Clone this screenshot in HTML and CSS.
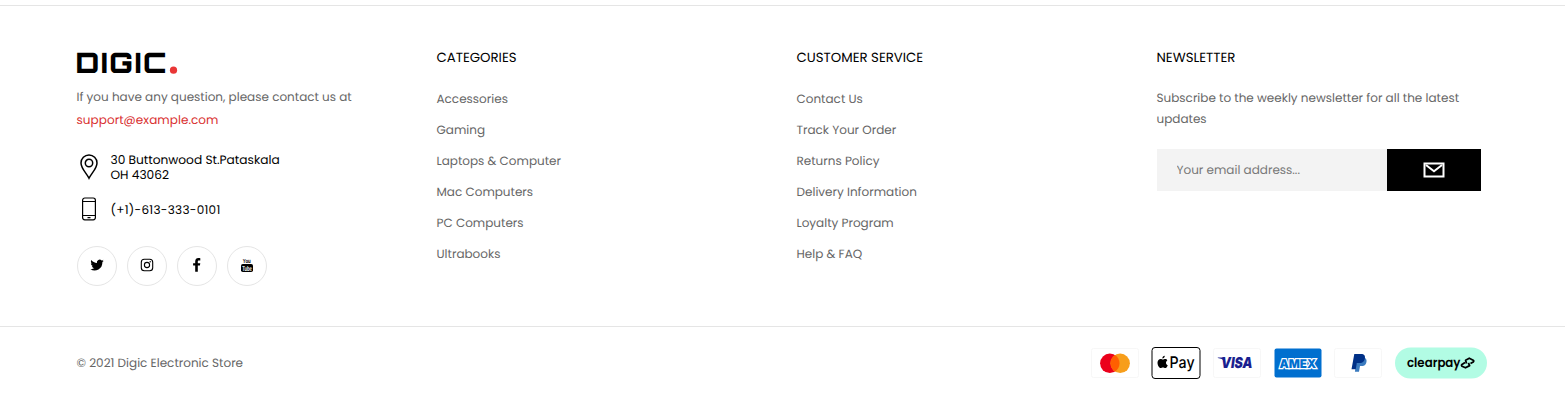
FILE: index.html
```html
<!DOCTYPE html>
<html lang="en">
<head>
<meta charset="utf-8">
<title>Digic Electronic Store</title>
<link rel="stylesheet" href="styles.css">
</head>
<body>
<footer class="footer">
  <div class="columns">
    <section class="about">
      <svg class="logo" width="102" height="22" viewBox="0 0 102 22" role="img" aria-label="Digic">
        <text class="logo-text" x="-1.500" y="21.300" textLength="93" lengthAdjust="spacingAndGlyphs">DIGIC</text>
        <circle cx="96.500" cy="18.200" r="3.600" fill="#e93636"/>
      </svg>
      <p class="question">If you have any question, please contact us at</p>
      <a class="mail">support@example.com</a>
      <div class="contact">
        <svg width="24" height="26" viewBox="0 0 24 26" fill="none" stroke="#000" stroke-width="1.500"><path d="M12 24.300C9.700 19.500 4 14.500 4 9A8 8 0 0 1 20 9C20 14.500 14.300 19.500 12 24.300Z"/><circle cx="12" cy="9" r="3.700"/></svg>
        <p class="address">30 Buttonwood St.Pataskala<br>OH 43062</p>
      </div>
      <div class="contact phone">
        <svg width="24" height="24" viewBox="0 0 24 24" fill="none" stroke="#000" stroke-width="1.200"><rect x="5.600" y="1" width="12.800" height="21.800" rx="2.200"/><path d="M5.600 4.500H18.400M5.600 18.500H18.400M10.500 20.700H13.500"/></svg>
        <p class="number">(+1)-613-333-0101</p>
      </div>
      <div class="socials">
        <a class="social"><svg width="14" height="14" viewBox="0 0 24 24"><path d="M23.600 4.900c-.8.400-1.700.6-2.700.8 1-.6 1.700-1.500 2-2.600-.9.500-1.900.9-3 1.100a4.700 4.700 0 0 0-8 4.300C8 8.300 4.500 6.400 2.200 3.500c-1.300 2.200-.6 5 1.400 6.300-.7 0-1.500-.2-2.100-.6 0 2.300 1.600 4.300 3.800 4.700-.7.200-1.400.2-2.100.1.600 1.900 2.300 3.200 4.400 3.300A9.500 9.500 0 0 1 .6 19.200 13.400 13.400 0 0 0 21.200 7.300c.9-.7 1.700-1.500 2.400-2.400z"/></svg></a>
        <a class="social"><svg width="14" height="14" viewBox="0 0 14 14" fill="none" stroke="#000"><rect x="1.300" y="1.300" width="11.400" height="11.400" rx="3" stroke-width="1.100"/><circle cx="7" cy="7" r="2.600" stroke-width="1.100"/><circle cx="10.200" cy="3.800" r=".7" fill="#000" stroke="none"/></svg></a>
        <a class="social"><svg width="14" height="14" viewBox="0 0 14 14"><path d="M10.300.3v2.200H9c-1 0-1.200.5-1.200 1.200v1.500h2.500L9.900 7.600H7.800V13.800H5.200V7.600H3.100V5.200H5.200V3.400C5.200 1.300 6.500.1 8.400.1c.9 0 1.600.1 1.900.2z"/></svg></a>
        <a class="social"><svg width="14" height="16" viewBox="0 0 14 16"><text class="yt" x="2.800" y="6" textLength="8" lengthAdjust="spacingAndGlyphs">You</text><rect x="1" y="7" width="12" height="8" rx="1.800"/><text class="yt yt-light" x="2.200" y="13.700" textLength="9.600" lengthAdjust="spacingAndGlyphs">Tube</text></svg></a>
      </div>
    </section>
    <nav class="col">
      <h2 class="title">CATEGORIES</h2>
      <ul class="links">
        <li>Accessories</li><li>Gaming</li><li>Laptops &amp; Computer</li><li>Mac Computers</li><li>PC Computers</li><li>Ultrabooks</li>
      </ul>
    </nav>
    <nav class="col">
      <h2 class="title">CUSTOMER SERVICE</h2>
      <ul class="links">
        <li>Contact Us</li><li>Track Your Order</li><li>Returns Policy</li><li>Delivery Information</li><li>Loyalty Program</li><li>Help &amp; FAQ</li>
      </ul>
    </nav>
    <section class="col">
      <h2 class="title">NEWSLETTER</h2>
      <p class="intro">Subscribe to the weekly newsletter for all the latest<br>updates</p>
      <form class="signup">
        <input class="email" type="email" placeholder="Your email address...">
        <button class="send" type="button" aria-label="Subscribe"><svg width="22" height="16" viewBox="0 0 22 16" fill="none" stroke="#fff" stroke-width="2"><rect x="1.500" y="1.500" width="19" height="13"/><path d="M3 3L11 9.300L19 3"/></svg></button>
      </form>
    </section>
  </div>
  <div class="bottom">
    <p class="copyright">© 2021 Digic Electronic Store</p>
    <div class="payments">
      <svg class="mastercard" width="48" height="32" viewBox="0 0 48 32"><rect class="card" x=".5" y="1.500" width="47" height="29" rx="2"/><circle cx="18.800" cy="16.300" r="9.700" fill="#eb001b"/><circle cx="29.200" cy="16.300" r="9.700" fill="#f79e1b"/><path d="M24 8.100a9.700 9.700 0 0 1 0 16.400a9.700 9.700 0 0 1 0-16.400z" fill="#ff5f00"/></svg>
      <svg class="apple" width="50" height="32" viewBox="0 0 50 32"><rect x="1" y=".5" width="48" height="31" rx="3" fill="#fff" stroke="#000"/><path d="M13.800 8.800c.1 1.500-1.200 2.700-2.500 2.700-.1-1.400 1.200-2.600 2.500-2.700zM16.300 13.400c-1.900 1.200-1.600 3.900.5 4.800-.5 1.400-1.500 2.900-2.600 2.900-.9 0-1.200-.5-2.300-.5s-1.400.5-2.200.5C8.100 21.100 6.500 18 6.500 15.800c0-2.500 1.600-3.800 3.100-3.800.9 0 1.700.6 2.300.6.600 0 1.500-.7 2.700-.6.500 0 1.300.3 1.700 1.400z"/><text class="pay" x="18.600" y="21" textLength="25" lengthAdjust="spacingAndGlyphs">Pay</text></svg>
      <svg width="48" height="32" viewBox="0 0 48 32"><rect class="card" x=".5" y="1.500" width="47" height="29" rx="2"/><text class="visa" x="8" y="21.200" textLength="31.500" lengthAdjust="spacingAndGlyphs">VISA</text><path d="M4.800 10.600h5l1.500 3.600c-1.400-1.700-3.300-2.700-6.500-3.100z" fill="#1a1f8f"/></svg>
      <svg width="48" height="32" viewBox="0 0 48 32"><rect x=".5" y="1.500" width="47" height="29" rx="2" fill="#006fcf"/><text class="amex" x="5.500" y="20.600" textLength="36.500" lengthAdjust="spacingAndGlyphs">AMEX</text></svg>
      <svg width="48" height="32" viewBox="0 0 48 32"><rect class="card" x=".5" y="1.500" width="47" height="29" rx="2"/><g transform="translate(1 0)"><path d="M22 10.500h6.500c3 .6 3.600 2.900 2.700 5.500-.8 2.300-2.400 3.100-5.200 3.100h-1l-1 5.700h-4.100z" fill="#3b7bbf"/><path d="M19.300 7h6.600c3.400 0 4.700 2 3.900 4.900-.8 3-2.800 4.200-6 4.200h-2l-1 6.100h-4.300z" fill="#003087"/></g></svg>
      <svg width="92" height="32" viewBox="0 0 92 32"><rect y=".5" width="92" height="31" rx="15.500" fill="#b2fce4"/><text class="clearpay" x="12" y="20.300" textLength="53.500" lengthAdjust="spacingAndGlyphs">clearpay</text><g fill="none" stroke="#000" stroke-width="1.800" stroke-linejoin="round"><path d="M70 15.400L67 17.400Q66 18.400 67 19.200L70.500 20.800L74.600 18.600L73.400 15.800"/><path d="M71.500 16.600L70.600 13.200L74.300 11.200L78.200 13.200Q79.300 14 78.200 15L75.500 16.600"/></g></svg>
    </div>
  </div>
</footer>
</body>
</html>
```
FILE: styles.css
```css
* { box-sizing: border-box; }
body { margin: 0; background: #fff; color: #000; font: 12px/15px Poppins, Inter, sans-serif; text-rendering: geometricPrecision; }
h2, p, ul { margin: 0; padding: 0; font-weight: 400; }
ul { list-style: none; }
svg { display: block; flex: none; overflow: visible; }
.footer { margin-top: 5px; border-top: 1px solid #e5e5e5; }
.columns { display: grid; grid-template-columns: 360px 360px 360px 324px; height: 320px; padding: 46px 0 0 76.5px; }
.logo-text { font: 900 28px Orbitron, Michroma, Audiowide, Inter, sans-serif; letter-spacing: 2px; }
.question { margin-top: 13px; line-height: 22px; color: #666; white-space: nowrap; }
.mail { display: block; line-height: 24px; letter-spacing: .06px; color: #d92f2f; }
.contact { display: flex; align-items: center; gap: 10px; margin-top: 18px; }
.contact.phone { margin-top: 14px; }
.address { padding-top: 2px; font-size: 12.2px; }
.number { padding-top: 3px; letter-spacing: .28px; }
.socials { display: flex; gap: 10px; margin-top: 25px; }
.social { display: flex; align-items: center; justify-content: center; width: 40px; height: 40px; padding-bottom: 2px; border: 1px solid #e5e5e5; border-radius: 50%; }
.yt { font: 700 6px "Liberation Sans", sans-serif; }
.yt-light { fill: #fff; font-size: 7px; }
.title { font-size: 13.3px; line-height: 22px; margin-top: -5px; }
.links { margin-top: 15px; color: #666; }
.links li { height: 31px; line-height: 31px; }
.intro { margin-top: 19px; line-height: 21px; color: #666; white-space: nowrap; }
.signup { display: flex; margin-top: 19px; height: 42px; }
.email { width: 230px; border: 0; border-radius: 0; padding: 0 20px; background: #f3f3f3; font: inherit; text-rendering: inherit; }
.email::placeholder { color: #777; opacity: 1; }
.send { display: flex; align-items: center; justify-content: center; width: 94px; padding: 0; border: 0; background: #000; }
.bottom { display: flex; align-items: center; justify-content: space-between; height: 72px; padding: 0 78px 0 76.5px; border-top: 1px solid #e5e5e5; }
.copyright { padding-top: 2px; color: #666; }
.payments { display: flex; gap: 12.7px; }
.mastercard { margin-right: 1px; }
.apple { margin: 0 -1px; }
.card { fill: #fff; stroke: #f7f7f7; }
.pay { font: 500 16px Inter, sans-serif; }
.visa { font: italic 900 15px Inter, sans-serif; fill: #1a1f8f; }
.amex { font: 900 12px Inter, sans-serif; fill: #006fcf; stroke: #fff; stroke-width: 2.4px; paint-order: stroke; }
.clearpay { font: 600 13px Poppins, Inter, sans-serif; }
```
